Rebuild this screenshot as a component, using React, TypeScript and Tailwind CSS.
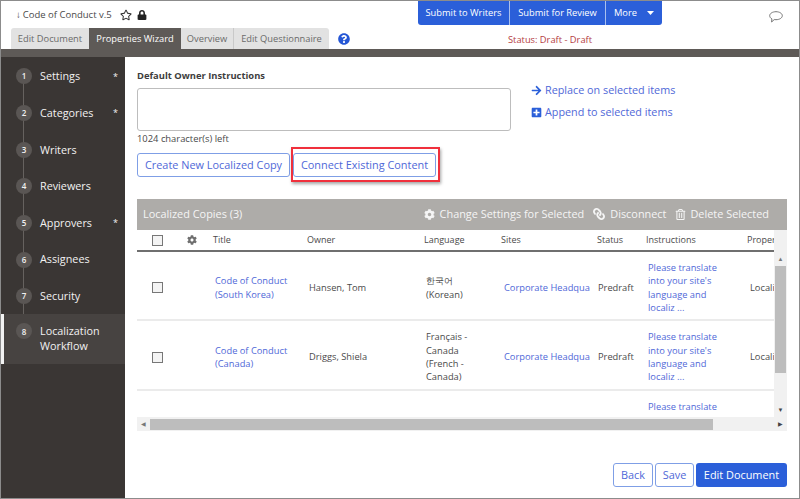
import React from 'react';
import { FaArrowRight, FaCog, FaLink, FaLock, FaPlusSquare, FaQuestionCircle, FaRegStar, FaRegTrashAlt } from 'react-icons/fa';

const steps = [
  { n: 1, label: 'Settings', star: true },
  { n: 2, label: 'Categories', star: true },
  { n: 3, label: 'Writers' },
  { n: 4, label: 'Reviewers' },
  { n: 5, label: 'Approvers', star: true },
  { n: 6, label: 'Assignees' },
  { n: 7, label: 'Security' },
];

const Row: React.FC<{ title: string[]; owner: string; lang: string[]; h: string; clipped?: boolean }> = ({ title, owner, lang, h, clipped }) => (
  <div className={`grid grid-cols-[78px_94px_117px_78px_94px_50px_102px_37px] ${h} ${clipped ? '' : 'border-b-2 border-[#ebebeb]'} items-center pt-[4px] text-[9.3px] leading-[13.4px] text-[#4a4a4a]`}>
    <div className="pl-[15px]">
      <div className="h-[11px] w-[11px] border border-[#777] bg-[#f4f4f4]" />
    </div>
    <div className="text-[#4f68d8]">{title.map(t => <div key={t}>{t}</div>)}</div>
    <div>{owner}</div>
    <div>{lang.map(t => <div key={t}>{t}</div>)}</div>
    <div className="whitespace-nowrap text-[#4f68d8]">Corporate Headqua</div>
    <div>Predraft</div>
    <div className="text-[#4f68d8]">
      <div>Please translate</div>
      <div>into your site's</div>
      <div>language and</div>
      <div>localiz ...</div>
    </div>
    <div className="whitespace-nowrap">Locali</div>
  </div>
);

export default function App() {
  return (
    <div className="flex h-[499px] w-[800px] flex-col overflow-hidden border border-[#8c8c8c] bg-white font-['Open_Sans',sans-serif] text-[#4a4a4a]">
      {/* Header */}
      <div className="flex h-[48px] shrink-0 bg-white">
        <div className="w-[388px] shrink-0 pl-[10px]">
          <div className="flex h-[27px] items-center pt-[1px] pl-[5px] text-[9.5px]">
            <span className="mr-[2px]">↓</span>
            <span>Code of Conduct v.5</span>
            <FaRegStar className="ml-[8px] h-[12px] w-[12px] text-[#333]" />
            <FaLock className="ml-[5px] h-[10px] w-[10px] text-[#222]" />
          </div>
          <div className="flex h-[21px] items-center text-[9.3px]">
            <div className="flex h-full w-[78px] items-center justify-center rounded-tl-[3px] bg-[#e2e2e2] text-[#6a6a6a]">Edit Document</div>
            <div className="flex h-full w-[92px] items-center justify-center bg-[#5e5a57] text-white">Properties Wizard</div>
            <div className="flex h-full w-[53px] items-center justify-center border-r border-[#c9c9c9] bg-[#e2e2e2] text-[#6a6a6a]">Overview</div>
            <div className="flex h-full w-[95px] items-center justify-center rounded-tr-[3px] bg-[#e2e2e2] text-[#6a6a6a]">Edit Questionnaire</div>
            <FaQuestionCircle className="ml-[9px] h-[12px] w-[12px] text-[#2557d6]" />
          </div>
        </div>
        <div className="flex w-[302px] shrink-0 flex-col items-center">
          <div className="flex h-[24px] w-[244px] overflow-hidden rounded-b-[3px] bg-[#2b5fd9] text-[9.3px] text-white">
            <div className="flex w-[92px] items-center justify-center border-r border-[#a9c0ee]">Submit to Writers</div>
            <div className="flex w-[96px] items-center justify-center border-r border-[#a9c0ee]">Submit for Review</div>
            <div className="flex flex-1 items-center justify-between pr-[8px] pl-[8px]">
              More
              <svg width="7" height="4" viewBox="0 0 7 4" className="fill-white"><path d="M0 0h7L3.5 4z" /></svg>
            </div>
          </div>
          <div className="pt-[8px] pl-[20px] text-[9.3px] leading-[14px] text-[#b5403f]">Status: Draft - Draft</div>
        </div>
        <div className="flex flex-1 justify-end pt-[10px] pr-[16px]">
          <svg width="14" height="12" viewBox="0 0 14 12" fill="none" stroke="#777" strokeWidth="1">
            <path d="M7 .7c3.4 0 6.3 1.7 6.3 4s-2.9 4-6.3 4c-.6 0-1.2 0-1.8-.1L2.6 11l.3-3.1C1.500 7.100.7 6 .7 4.700c0-2.300 2.900-4 6.300-4z" />
          </svg>
        </div>
      </div>
      <div className="h-[8px] shrink-0 bg-[#5e5a57]" />

      <div className="flex min-h-0 flex-1">
        {/* Sidebar */}
        <div className="w-[124px] shrink-0 bg-[#3a3634] pt-[1px] text-[10.8px] text-[#f2f2f2]">
          <div className="relative">
            <div className="absolute top-[15px] bottom-[30px] left-[22px] w-px bg-[#66625f]" />
            {steps.map(s => (
              <div key={s.n} className="relative flex h-[36.65px] items-center pl-[15px]">
                <div className="flex h-[16px] w-[16px] items-center justify-center rounded-full bg-[#5a5654] text-[8px] font-semibold">{s.n}</div>
                <span className="ml-[8px] flex-1">{s.label}</span>
                {s.star && <span className="pr-[7px] text-[9px] leading-none">*</span>}
              </div>
            ))}
            <div className="relative flex h-[50px] border-l-[3px] border-[#f2f2f2] bg-[#474341] pt-[9px] pl-[12px] leading-[15px]">
              <div className="flex h-[16px] w-[16px] shrink-0 items-center justify-center rounded-full bg-[#5a5654] text-[8px] font-semibold">8</div>
              <span className="ml-[8px]">Localization<br />Workflow</span>
            </div>
          </div>
        </div>

        {/* Content */}
        <div className="min-w-0 flex-1 pt-[13px] pl-[12px]">
          <div className="text-[9.4px] leading-[12px] font-bold text-[#3d3d3d]">Default Owner Instructions</div>
          <div className="mt-[6px] flex">
            <div className="h-[43px] w-[374px] shrink-0 rounded-[3px] border border-[#bdbdbd]" />
            <div className="-mt-[6px] ml-[20px] flex flex-col gap-[6px] text-[10.8px] leading-[16px] text-[#4f68d8]">
              <div className="flex items-center gap-[3px]"><FaArrowRight className="h-[11px] w-[11px] text-[#2b5fd9]" />Replace on selected items</div>
              <div className="flex items-center gap-[3px]"><FaPlusSquare className="h-[11px] w-[11px] text-[#2b5fd9]" />Append to selected items</div>
            </div>
          </div>
          <div className="mt-[1px] text-[9.4px] leading-[13px]">1024 character(s) left</div>

          <div className="mt-[8px] flex text-[10.9px] text-[#4f68d8]">
            <div className="flex h-[24px] w-[153px] items-center justify-center rounded-[3px] border border-[#7f9fe6]">Create New Localized Copy</div>
            <div className="relative ml-[3px] flex h-[24px] w-[143px] items-center justify-center rounded-[3px] border border-[#7f9fe6]">
              Connect Existing Content
              <div className="absolute -top-[7px] -right-[5px] -bottom-[6px] -left-[3px] border-[2px] border-[#f0303c] shadow-[1px_2px_3px_rgba(0,0,0,0.35)]" />
            </div>
          </div>

          {/* Table panel */}
          <div className="relative mt-[22px] w-[650px]">
            <div className="flex h-[31px] items-center justify-between bg-[#aeaca9] pr-[18px] pl-[6px] text-[10.9px] text-[#f5f5f5]">
              <span>Localized Copies (3)</span>
              <div className="flex items-center">
                <FaCog className="mr-[5px] h-[11px] w-[11px]" />
                <span>Change Settings for Selected</span>
                <FaLink className="mr-[5px] ml-[9px] h-[12px] w-[12px] -scale-x-100" />
                <span>Disconnect</span>
                <FaRegTrashAlt className="mr-[4px] ml-[9px] h-[11px] w-[11px]" />
                <span>Delete Selected</span>
              </div>
            </div>
            <div className="h-[201px] overflow-hidden">
              <div className="grid h-[22px] grid-cols-[76px_94px_117px_77px_96px_49px_101px_40px] items-center border-b-2 border-[#6f6f6f] text-[9px] text-[#4a4a4a]">
                <div className="flex items-center pl-[15px]">
                  <div className="h-[11px] w-[11px] border border-[#777] bg-[#f4f4f4]" />
                  <FaCog className="ml-[24px] h-[10px] w-[10px] text-[#6f6f6f]" />
                </div>
                <div>Title</div>
                <div>Owner</div>
                <div>Language</div>
                <div>Sites</div>
                <div>Status</div>
                <div>Instructions</div>
                <div>Proper</div>
              </div>
              <Row h="h-[69px]" title={['Code of Conduct', '(South Korea)']} owner="Hansen, Tom" lang={['한국어', '(Korean)']} />
              <Row h="h-[70px]" title={['Code of Conduct', '(Canada)']} owner="Driggs, Shiela" lang={['Français -', 'Canada', '(French -', 'Canada)']} />
              <Row h="h-[68px]" clipped title={['Code of Conduct', '(Spain)']} owner="Driggs, Shiela" lang={['English', '(English)']} />
            </div>
            {/* Scrollbars */}
            <div className="absolute top-[31px] right-0 bottom-[14px] flex w-[13px] flex-col bg-[#f1f1f1] pt-[22px]">
              <div className="flex h-[14px] items-center justify-center text-[6px] text-[#777]">▲</div>
              <div className="ml-[1px] h-[107px] w-[11px] bg-[#bdbdbd]" />
              <div className="mt-auto flex h-[14px] items-center justify-center text-[6px] text-[#444]">▼</div>
            </div>
            <div className="absolute right-0 bottom-0 flex h-[14px] w-full items-center bg-[#f1f1f1]">
              <div className="w-[13px] text-center text-[6px] text-[#777]">◀</div>
              <div className="h-[11px] w-[563px] bg-[#bdbdbd]" />
              <div className="flex-1" />
              <div className="w-[13px] text-center text-[6px] text-[#444]">▶</div>
            </div>
          </div>

          {/* Footer */}
          <div className="mt-[32px] flex w-[650px] justify-end gap-[2px] text-[10.9px]">
            <div className="flex h-[24px] w-[40px] items-center justify-center rounded-[3px] border border-[#7f9fe6] text-[#4f68d8]">Back</div>
            <div className="flex h-[24px] w-[39px] items-center justify-center rounded-[3px] border border-[#7f9fe6] text-[#4f68d8]">Save</div>
            <div className="flex h-[24px] w-[91px] items-center justify-center rounded-[3px] bg-[#2b5fd9] text-white">Edit Document</div>
          </div>
        </div>
      </div>
    </div>
  );
}
